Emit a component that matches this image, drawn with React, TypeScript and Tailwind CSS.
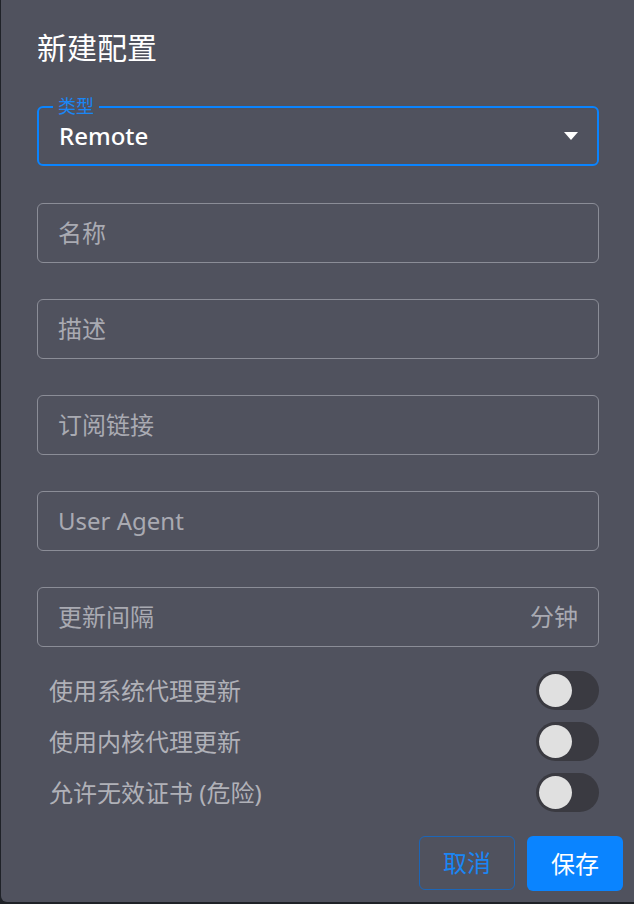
import React, { useState } from "react";

const font = { fontFamily: '"Noto Sans", "Noto Sans CJK SC", sans-serif' };

const TextField = ({ placeholder, suffix }: { placeholder: string; suffix?: string }) => (
  <div className="flex h-[60px] w-full items-center rounded-[6px] border border-[#8b8d97] px-5 text-[24px] text-[#a9aab2]">
    <span className="flex-1">{placeholder}</span>
    {suffix && <span>{suffix}</span>}
  </div>
);

const Toggle = ({ label }: { label: string }) => {
  const [on, setOn] = useState(false);
  return (
    <div className="flex h-[51px] items-center justify-between pl-3">
      <span className="text-[24px] text-[#b0b1b8]">{label}</span>
      <button
        onClick={() => setOn(!on)}
        className="flex h-[39px] w-[63px] items-center rounded-full bg-[#3a3a41] px-[3px]"
      >
        <span className="h-[33px] w-[33px] rounded-full bg-[#e0e0e0]" />
      </button>
    </div>
  );
};

export default function App() {
  return (
    <div className="h-[904px] w-[634px] overflow-hidden bg-[#1f2228]" style={font}>
      <div className="ml-[1px] flex h-[902px] w-[634px] flex-col rounded-bl-[6px] bg-[#50525e]">
        <h2 className="px-9 pt-6 text-[30px] leading-[48px] text-white">新建配置</h2>

        <div className="flex flex-col px-9 pt-[34px]">
          {/* select */}
          <div className="relative mb-[37px] flex h-[60px] items-center rounded-[6px] border-2 border-[#0a84ff] pl-5 pr-[18px]">
            <span className="absolute -top-[12px] left-[14px] bg-[#50525e] px-[5px] text-[18px] leading-[20px] text-[#1a86f5]">
              类型
            </span>
            <span className="flex-1 text-[24px] font-medium text-white">Remote</span>
            <svg width="16" height="8" viewBox="0 0 16 8">
              <path d="M1 0h14L8 8z" fill="#ffffff" />
            </svg>
          </div>
          <div className="flex flex-col gap-9">
            <TextField placeholder="名称" />
            <TextField placeholder="描述" />
            <TextField placeholder="订阅链接" />
            <TextField placeholder="User Agent" />
            <TextField placeholder="更新间隔" suffix="分钟" />
          </div>
        </div>

        <div className="mt-[18px] flex flex-col px-9">
          <Toggle label="使用系统代理更新" />
          <Toggle label="使用内核代理更新" />
          <Toggle label="允许无效证书 (危险)" />
        </div>

        <div className="mt-[18px] flex justify-end gap-3 pr-3">
          <button className="h-[54px] w-[96px] rounded-[6px] border border-[#1c66b8] text-[24px] text-[#1a86f5]">
            取消
          </button>
          <button className="h-[55px] w-[96px] rounded-[6px] bg-[#0a84ff] text-[24px] text-white">
            保存
          </button>
        </div>
      </div>
    </div>
  );
}
